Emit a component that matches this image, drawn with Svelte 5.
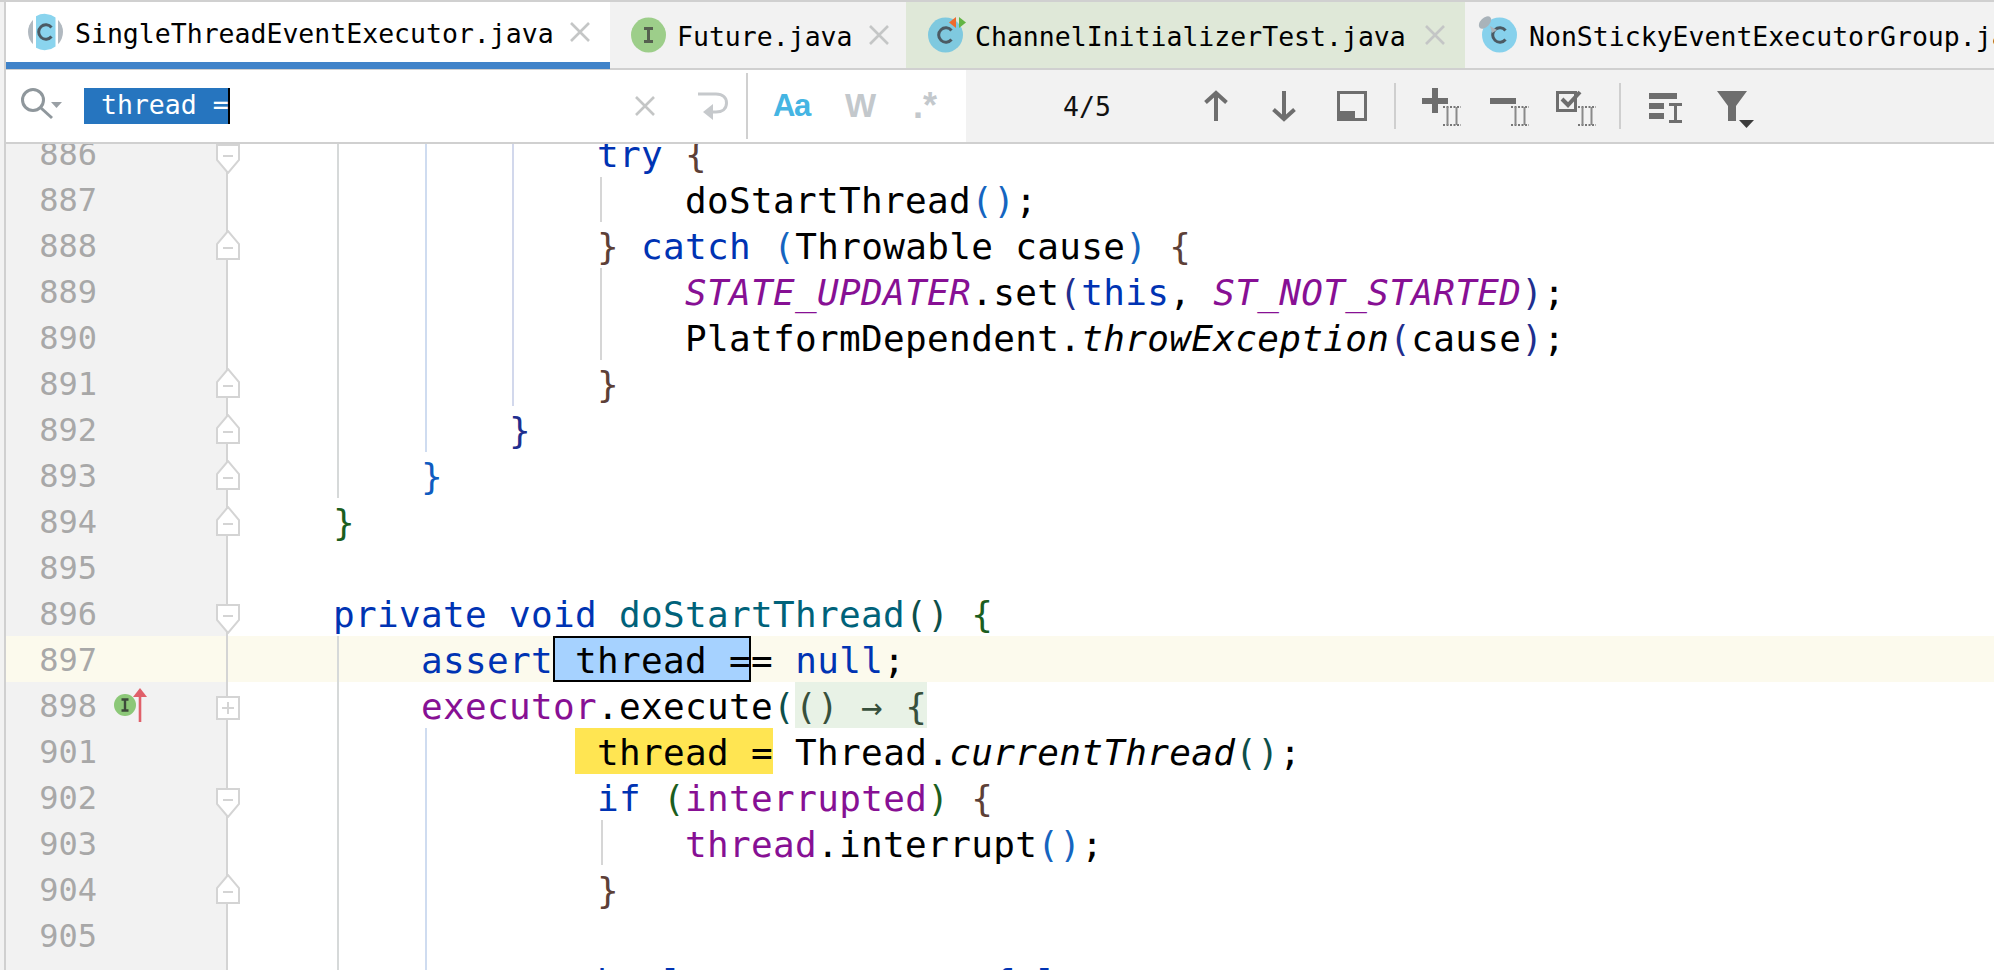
<script>
  // tabs along the top of the editor
  const tabs = [
    { name: "SingleThreadEventExecutor.java", cls: "active", icon: "class", close: true },
    { name: "Future.java", cls: "future", icon: "iface", close: true },
    { name: "ChannelInitializerTest.java", cls: "test", icon: "test", close: true },
    { name: "NonStickyEventExecutorGroup.java", cls: "pinned", icon: "pin", close: false },
  ];

  // indent guides, abs page coordinates
  const guides = [
    { x: 337, from: 144, to: 498, c: "#d6d9d9" },
    { x: 337, from: 636, to: 970, c: "#d6d9d9" },
    { x: 425, from: 144, to: 452, c: "#cfdcf0" },
    { x: 425, from: 728, to: 970, c: "#cfdcf0" },
    { x: 512, from: 144, to: 406, c: "#d2d8ec" },
    { x: 600, from: 177, to: 222, c: "#d6d6d6" },
    { x: 600, from: 268, to: 360, c: "#d6d6d6" },
    { x: 601, from: 820, to: 865, c: "#d6d6d6" },
  ];

  const rows = [
    { n: 886, fold: "start", ind: 16, t: [["try", "k"], [" "], ["{", "brown"]] },
    { n: 887, ind: 20, t: [["doStartThread"], ["()", "blue"], [";"]] },
    { n: 888, fold: "end", ind: 16, t: [["}", "brown"], [" "], ["catch", "k"], [" "], ["(", "blue"], ["Throwable cause"], [")", "blue"], [" "], ["{", "brown"]] },
    { n: 889, ind: 20, t: [["STATE_UPDATER", "f i"], [".set"], ["(", "navy"], ["this", "k"], [", "], ["ST_NOT_STARTED", "f i"], [")", "navy"], [";"]] },
    { n: 890, ind: 20, t: [["PlatformDependent."], ["throwException", "i"], ["(", "navy"], ["cause"], [")", "navy"], [";"]] },
    { n: 891, fold: "end", ind: 16, t: [["}", "brown"]] },
    { n: 892, fold: "end", ind: 12, t: [["}", "navy"]] },
    { n: 893, fold: "end", ind: 8, t: [["}", "blue2"]] },
    { n: 894, fold: "end", ind: 4, t: [["}", "green"]] },
    { n: 895, ind: 0, t: [] },
    { n: 896, fold: "start", ind: 4, t: [["private void", "k"], [" "], ["doStartThread", "m"], ["()", "teal"], [" "], ["{", "green"]] },
    { n: 897, cur: true, ind: 8, t: [["assert", "k"], [" thread =", "sel"], ["= "], ["null", "k"], [";"]] },
    { n: 898, fold: "closed", mark: true, ind: 8, t: [["executor", "f"], [".execute"], ["(", "teal"], ["() → {", "lam"]] },
    { n: 901, ind: 15, t: [[" thread =", "hit"], [" Thread."], ["currentThread", "i"], ["()", "teal"], [";"]] },
    { n: 902, fold: "start", ind: 16, t: [["if", "k"], [" "], ["(", "green"], ["interrupted", "f"], [")", "green"], [" "], ["{", "brown"]] },
    { n: 903, ind: 20, t: [["thread", "f"], [".interrupt"], ["()", "blue"], [";"]] },
    { n: 904, fold: "end", ind: 16, t: [["}", "brown"]] },
    { n: 905, ind: 0, t: [] },
    { n: 906, ind: 16, t: [["boolean", "k"], [" success = "], ["false", "k"], [";"]] },
  ];
</script>

{#snippet beam(x)}
  <g class="beam" transform="translate({x} 0)">
    <path class="dots" d="M0 23H18M0 41H18" />
    <path class="stems" d="M4.5 23V41M13.5 23V41" />
  </g>
{/snippet}

<div class="page">
  <div class="window">
    <div class="tabs">
      {#each tabs as tab}
        <div class="tab {tab.cls}">
          <svg class="ticon" width="36" height="36" viewBox="0 0 36 36">
            {#if tab.icon === "class"}
              <circle cx="17.5" cy="18" r="17.5" fill="#b1b9c0" />
              <rect x="5" y="0" width="25" height="36" fill="#fff" />
              <path d="M8 2.2A17.5 17.5 0 0 1 27.5 3.6L27.5 32.4A17.5 17.5 0 0 1 8 33.8Z" fill="#8ad4ee" />
              <path class="cc" d="M23.5 13.5A7.2 7.2 0 1 0 23.5 22.5" />
            {:else if tab.icon === "iface"}
              <circle cx="18.5" cy="18" r="17.5" fill="#9dce8a" />
              <path class="ii" d="M14 11.5H23M18.5 11.5V24.5M14 24.5H23" />
            {:else if tab.icon === "test"}
              <circle cx="17.5" cy="18" r="17.5" fill="#7fc9df" />
              <path class="cc" d="M23.5 13.5A7.2 7.2 0 1 0 23.5 22.5" />
              <path d="M28 0V11L21 5.5Z" fill="#ee6a2c" />
              <path d="M31 0V11L38 5.5Z" fill="#62b543" />
            {:else}
              <circle cx="17.5" cy="18" r="17.5" fill="#87d1ec" />
              <path class="cc" d="M23.5 13.5A7.2 7.2 0 1 0 23.5 22.5" />
              <path d="M8 9L15 13L10 16Z" fill="#a9b3ba" />
              <ellipse cx="3" cy="5.5" rx="7.5" ry="4.5" transform="rotate(-45 3 5.5)" fill="#a9b3ba" />
            {/if}
          </svg>
          <span class="tname">{tab.name}</span>
          {#if tab.close}
            <svg class="tclose" width="20" height="20" viewBox="0 0 20 20"><path d="M1 1L19 19M19 1L1 19" /></svg>
          {/if}
        </div>
      {/each}
    </div>

    <div class="search">
      <div class="find">
        <svg class="glass" width="44" height="46" viewBox="0 0 44 46">
          <circle cx="13" cy="17" r="10.5" />
          <path d="M21 25L32 35" />
          <polygon points="31,19 42,19 36.5,25" />
        </svg>
        <span class="query">thread =</span>
        <svg class="clear" width="20" height="20" viewBox="0 0 20 20"><path d="M1 1L19 19M19 1L1 19" /></svg>
        <svg class="enter" width="30" height="28" viewBox="0 0 30 28">
          <path d="M0 2H18C25 2 28.5 6 28.5 11C28.5 17 24 20 18 20H10" />
          <polygon points="5,20 15,12 15,28" />
        </svg>
        <span class="vsep"></span>
        <span class="opt aa">Aa</span>
        <span class="opt w">W</span>
        <span class="opt rx">.*</span>
      </div>
      <div class="results">
        <span class="count">4/5</span>
        <div class="tools">
          <svg viewBox="0 -1 56 46"><path class="st" d="M28 9V37M17.5 18.5L28 9L38.5 18.5" /></svg>
          <svg viewBox="0 -1 56 46"><path class="st" d="M28 7V35M17.5 25.5L28 35L38.5 25.5" /></svg>
          <svg viewBox="0 -1 56 46">
            <rect class="box" x="14.5" y="8.5" width="27" height="27" />
            <rect class="fill" x="13" y="27" width="18" height="10" />
          </svg>
          <span class="tsep"></span>
          <svg viewBox="0 -1 56 46">
            <path class="fill" d="M9 14H19V4H25V14H35V20H25V29H19V20H9Z" />
            {@render beam(30)}
          </svg>
          <svg viewBox="0 -1 56 46">
            <rect class="fill" x="9" y="14" width="26" height="6" />
            {@render beam(30)}
          </svg>
          <svg viewBox="0 -1 56 46">
            <rect class="box" x="8.5" y="8.5" width="18" height="18" />
            <path class="st" d="M13 15L19 21L31 8" />
            {@render beam(29)}
          </svg>
          <span class="tsep"></span>
          <svg viewBox="0 -1 56 46">
            <rect class="fill" x="11" y="9" width="28" height="6" />
            <rect class="fill" x="11" y="19" width="15" height="6" />
            <rect class="fill" x="11" y="29" width="15" height="6" />
            <path class="fill" d="M31 19H44V22H39V36H44V39H31V36H36V22H31Z" />
          </svg>
          <svg viewBox="0 -1 56 46">
            <polygon class="fill" points="11,7 41,7 30,22 30,37 22,37 22,22" />
            <polygon points="33,36 48,36 40.5,44" fill="#3c3c3c" />
          </svg>
        </div>
      </div>
    </div>

    <div class="editor">
      <div class="rows">
        {#each rows as row}
          <div class="row" class:cur={row.cur}>
            <div class="gutter">
              <span class="num">{row.n}</span>
              {#if row.mark}
                <svg class="mark" width="34" height="46" viewBox="0 0 34 46">
                  <circle cx="11" cy="23" r="11" fill="#8cc878" />
                  <path d="M7.5 17.5H14.5M11 17.5V28.5M7.5 28.5H14.5" fill="none" stroke="#3d4a3a" stroke-width="2.4" />
                  <path d="M26 13V40" stroke="#e0606a" stroke-width="2.6" />
                  <polygon points="19,15 33,15 26,6" fill="#e0606a" />
                </svg>
              {/if}
            </div>
            <div class="code">{" ".repeat(row.ind)}{#each row.t as tk}<span class={tk[1]}>{tk[0]}</span>{/each}</div>
            {#if row.fold === "start"}
              <svg class="fold down" width="24" height="30" viewBox="0 0 24 30">
                <path class="shell" d="M1 1H23V16L12 29L1 16Z" />
                <path class="sign" d="M7 12H17" />
              </svg>
            {:else if row.fold === "end"}
              <svg class="fold up" width="24" height="30" viewBox="0 0 24 30">
                <path class="shell" d="M1 29H23V14L12 1L1 14Z" />
                <path class="sign" d="M7 18H17" />
              </svg>
            {:else if row.fold === "closed"}
              <svg class="fold closed" width="24" height="24" viewBox="0 0 24 24">
                <path class="shell" d="M1 1H23V23H1Z" />
                <path class="sign" d="M6 12H18M12 6V18" />
              </svg>
            {/if}
          </div>
        {/each}
      </div>
      {#each guides as g}
        <span class="guide" style="left:{g.x - 6}px;top:{g.from - 144}px;height:{g.to - g.from}px;background:{g.c}"></span>
      {/each}
    </div>
  </div>
</div>

<style>
  :global(body) {
    background: #f2f2f2;
    overflow: hidden;
  }

  .page {
    height: 968px;
    border-top: 2px solid #d0d0d0;
    padding-left: 4px;
    font-family: "DejaVu Sans Mono", monospace;
  }

  .window {
    height: 100%;
    border-left: 2px solid #d0d0d0;
    background: #fff;
    display: flex;
    flex-direction: column;
    overflow: hidden;
  }

  /* tabs */
  .tabs {
    display: flex;
    flex: none;
    height: 66px;
    background: #f2f2f2;
    border-bottom: 2px solid #d0d0d0;
  }

  .tab {
    display: flex;
    flex: none;
    align-items: center;
    height: 66px;
    padding-left: 22px;
    box-sizing: border-box;
    font-size: 26.5px;
    color: #000;
  }

  .tname {
    padding-top: 2px;
  }

  .tab.active {
    width: 604px;
    height: 67px;
    padding-bottom: 7px;
    background: #fff;
    box-shadow: inset 0 -7px #4083c9;
    position: relative;
  }

  .tab.future {
    width: 296px;
    padding-left: 20px;
  }

  .tab.test {
    width: 559px;
    background: #dfe8d8;
  }

  .tab.test .tclose {
    margin-left: 19px;
  }

  .tab.pinned {
    flex: 1;
    min-width: 0;
    padding-left: 17px;
    white-space: nowrap;
    overflow: hidden;
  }

  .ticon {
    flex: none;
    margin-right: 11px;
    overflow: visible;
  }

  .cc {
    fill: none;
    stroke: #4b5a63;
    stroke-width: 3;
  }

  .ii {
    fill: none;
    stroke: #55604f;
    stroke-width: 3;
  }

  .tclose {
    margin-left: 16px;
    flex: none;
  }

  .tclose path,
  .clear path {
    fill: none;
    stroke: #c4c6c6;
    stroke-width: 2.6;
  }

  /* find bar */
  .search {
    display: flex;
    flex: none;
    height: 72px;
    border-bottom: 2px solid #d0d0d0;
  }

  .find {
    display: flex;
    align-items: center;
    width: 958px;
    flex: none;
    padding-left: 14px;
    box-sizing: content-box;
    margin-right: -14px;
    background: #fff;
    border-right: 2px solid #d0d0d0;
  }

  .glass {
    flex: none;
  }

  .glass circle,
  .glass path {
    fill: none;
    stroke: #8f979c;
    stroke-width: 3;
  }

  .glass polygon {
    fill: #9aa0a5;
  }

  .query {
    width: 146px;
    height: 36px;
    flex: none;
    margin-left: 20px;
    padding-left: 17px;
    box-sizing: border-box;
    background: #2675bf;
    border-right: 2px solid #000;
    color: #fff;
    font-size: 26.5px;
    line-height: 34px;
    white-space: pre;
  }

  .clear {
    flex: none;
    margin-left: 405px;
  }

  .enter {
    flex: none;
    margin-left: 43px;
  }

  .enter path {
    fill: none;
    stroke: #c6c9cc;
    stroke-width: 3;
  }

  .enter polygon {
    fill: #c6c9cc;
  }

  .vsep {
    width: 2px;
    height: 66px;
    flex: none;
    margin-left: 18px;
    background: #d0d0d0;
  }

  .opt {
    flex: none;
    font-family: "Liberation Sans", sans-serif;
    font-weight: 700;
    color: #c3c8cc;
  }

  .aa {
    width: 35px;
    margin-left: 25px;
    font-size: 31px;
    letter-spacing: -1.5px;
    color: #45b5e3;
  }

  .w {
    width: 30px;
    margin-left: 37px;
    font-size: 33px;
    letter-spacing: -1px;
  }

  .rx {
    margin-left: 38px;
    font-size: 36px;
  }

  .results {
    display: flex;
    align-items: center;
    flex: 1;
    min-width: 0;
    padding-left: 97px;
    background: #f2f2f2;
  }

  .count {
    width: 48px;
    flex: none;
    font-size: 26.5px;
    color: #111;
  }

  .tools {
    display: flex;
    align-items: center;
    gap: 12px;
    margin-left: 77px;
  }

  .tools svg {
    width: 56px;
    height: 46px;
    flex: none;
  }

  .tsep {
    width: 2px;
    height: 46px;
    flex: none;
    margin: 0 5px 0 2px;
    background: #cfcfcf;
  }

  .st {
    fill: none;
    stroke: #6e6e6e;
    stroke-width: 4;
  }

  .box {
    fill: none;
    stroke: #6e6e6e;
    stroke-width: 3;
  }

  .fill {
    fill: #6e6e6e;
  }

  .beam {
    fill: none;
  }

  .dots {
    stroke: #777;
    stroke-width: 2;
    stroke-dasharray: 2 1.5;
  }

  .stems {
    stroke: #8a8a8a;
    stroke-width: 2;
  }

  /* editor */
  .editor {
    flex: 1;
    min-height: 0;
    position: relative;
    overflow: hidden;
  }

  .rows {
    margin-top: -14px;
  }

  .row {
    display: flex;
    height: 46px;
    position: relative;
  }

  .row.cur {
    background: #fcfaed;
  }

  .gutter {
    display: flex;
    align-items: center;
    width: 220px;
    height: 46px;
    flex: none;
    background: #f2f2f2;
    border-right: 2px solid #d4d4d4;
  }

  .row.cur .gutter {
    background: #fcfaed;
  }

  .num {
    width: 91px;
    flex: none;
    padding-top: 2px;
    text-align: right;
    font-size: 32px;
    color: #a8a8a8;
  }

  .mark {
    flex: none;
    margin-left: 17px;
  }

  .code {
    padding-left: 17px;
    font-size: 36px;
    letter-spacing: 0.33px;
    line-height: 49px;
    white-space: pre;
    color: #000;
  }

  .code span {
    display: inline-block;
    height: 46px;
    vertical-align: top;
  }

  .fold {
    position: absolute;
    left: 210px;
  }

  .fold.down {
    top: 14px;
  }

  .fold.up {
    top: 8px;
  }

  .fold.closed {
    top: 14px;
  }

  .shell {
    fill: #fff;
    stroke: #d4d4d4;
    stroke-width: 2;
  }

  .sign {
    fill: none;
    stroke: #d4d4d4;
    stroke-width: 2;
  }

  .guide {
    position: absolute;
    width: 2px;
  }

  /* syntax */
  .k {
    color: #0033b3;
  }

  .f {
    color: #871094;
  }

  .i {
    font-style: italic;
  }

  .m {
    color: #00627a;
  }

  .blue {
    color: #1565c0;
  }

  .blue2 {
    color: #0f5cc0;
  }

  .navy {
    color: #1f2f8f;
  }

  .brown {
    color: #5d4037;
  }

  .green {
    color: #1b5e20;
  }

  .teal {
    color: #0d4f4a;
  }

  .sel {
    background: #a6d2ff;
    box-shadow: inset 0 0 0 2px #000;
  }

  .hit {
    background: #ffe552;
  }

  .lam {
    background: #e8f2e6;
    color: #37503c;
  }
</style>
